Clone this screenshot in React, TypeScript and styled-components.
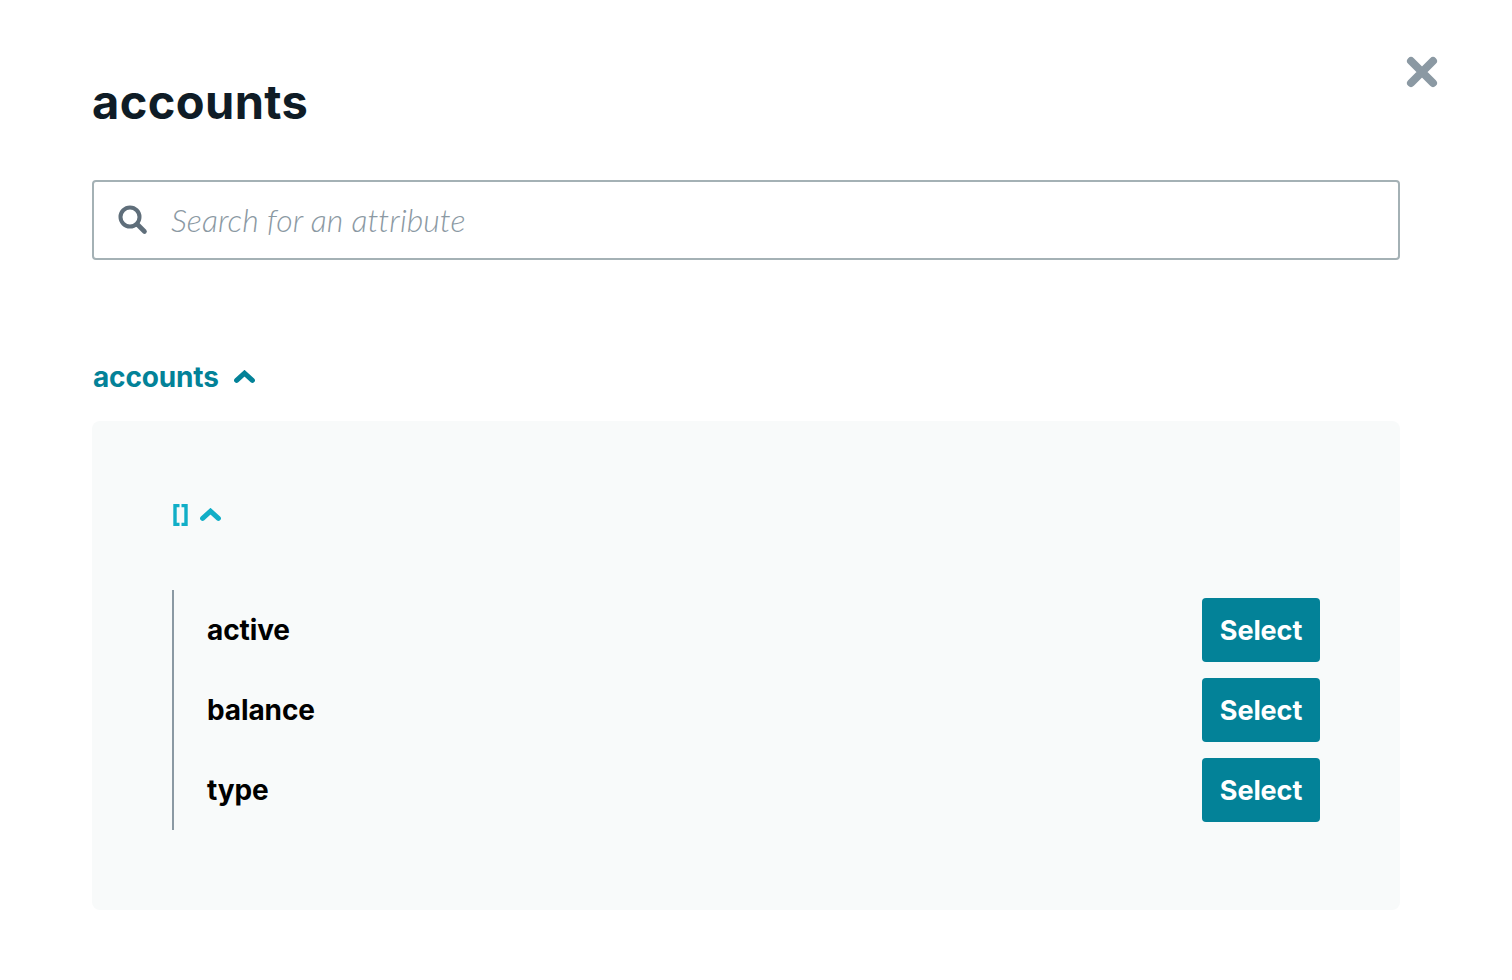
import { createGlobalStyle, styled } from 'styled-components';

const fields = ['active', 'balance', 'type'];

const GlobalStyle = createGlobalStyle`
  html, body {
    margin: 0;
    padding: 0;
    height: 100%;
    background: #ffffff;
    font-family: Inter, "Liberation Sans", sans-serif;
  }
`;

const ChevronUp = ({ size }: { size: number }) => (
  <svg width={size} height={size * 0.62} viewBox="0 0 21 13" fill="none">
    <path d="M2.6 10.4 L10.5 3.2 L18.4 10.4" stroke="currentColor" strokeWidth="5" strokeLinecap="round" strokeLinejoin="miter" />
  </svg>
);

const App = () => {
  return (
    <St.Modal>
      <GlobalStyle />
      <St.Close aria-label="Close">
        <svg width="32" height="32" viewBox="0 0 32 32" fill="none">
          <path d="M5 5 L27 27 M27 5 L5 27" stroke="currentColor" strokeWidth="8" strokeLinecap="round" />
        </svg>
      </St.Close>
      <St.Title>accounts</St.Title>
      <St.Search>
        <svg width="30" height="30" viewBox="0 0 30 30" fill="none">
          <circle cx="12" cy="12" r="9.5" stroke="#5f6e7a" strokeWidth="4" />
          <path d="M19.5 19.5 L26.5 26.5" stroke="#5f6e7a" strokeWidth="4.6" strokeLinecap="round" />
        </svg>
        <St.SearchInput placeholder="Search for an attribute" />
      </St.Search>
      <St.SectionToggle>
        accounts
        <ChevronUp size={21} />
      </St.SectionToggle>
      <St.Panel>
        <St.ArrayToggle>
          <St.Brackets viewBox="0 0 15 22" fill="none">
            <path d="M6.5 1.5 H2 V20.5 H6.5 M8.5 1.5 H13 V20.5 H8.5" stroke="currentColor" strokeWidth="3.4" />
          </St.Brackets>
          <ChevronUp size={21} />
        </St.ArrayToggle>
        <St.List>
          {fields.map((name) => (
            <St.Row key={name}>
              <St.FieldName>{name}</St.FieldName>
              <St.SelectButton>Select</St.SelectButton>
            </St.Row>
          ))}
        </St.List>
      </St.Panel>
    </St.Modal>
  );
};

export default App;

const St = {
  Modal: styled.div`
    position: relative;
    box-sizing: border-box;
    width: 1512px;
    height: 980px;
    padding: 72px 112px 0 92px;
    background: #ffffff;
    overflow: hidden;
  `,
  Close: styled.button`
    position: absolute;
    top: 56px;
    left: 1406px;
    width: 32px;
    height: 32px;
    padding: 0;
    border: 0;
    background: none;
    color: #8b99a3;
  `,
  Title: styled.h1`
    margin: 0;
    height: 60px;
    font-size: 47px;
    line-height: 60px;
    font-weight: 700;
    letter-spacing: 0.4px;
    color: #0f1c26;
  `,
  Search: styled.div`
    box-sizing: border-box;
    display: flex;
    align-items: center;
    gap: 23px;
    height: 80px;
    margin-top: 48px;
    padding: 0 24px;
    border: 2px solid #a4b1b5;
    border-radius: 4px;
  `,
  SearchInput: styled.input`
    flex: 1;
    border: 0;
    outline: 0;
    padding: 0 0 2px;
    background: none;
    font-family: Lato, "Liberation Sans", sans-serif;
    font-size: 32px;
    font-style: italic;
    font-weight: 300;
    letter-spacing: 0.05px;
    color: #8b99a3;

    &::placeholder {
      color: #8b99a3;
      opacity: 1;
    }
  `,
  SectionToggle: styled.div`
    display: flex;
    align-items: center;
    gap: 15px;
    height: 40px;
    margin-top: 97px;
    padding-left: 1px;
    font-size: 28px;
    font-weight: 700;
    letter-spacing: -0.15px;
    color: #038298;
  `,
  Panel: styled.div`
    box-sizing: border-box;
    height: 489px;
    margin-top: 24px;
    padding: 80px;
    background: #f8fafa;
    border-radius: 8px;
  `,
  ArrayToggle: styled.div`
    display: flex;
    align-items: center;
    gap: 12px;
    height: 28px;
    padding-left: 1px;
    color: #11aec7;
  `,
  Brackets: styled.svg`
    width: 15px;
    height: 22px;
  `,
  List: styled.div`
    display: flex;
    flex-direction: column;
    gap: 16px;
    height: 240px;
    box-sizing: border-box;
    margin-top: 61px;
    padding: 8px 0 8px 33px;
    border-left: 2px solid #8b99a3;
  `,
  Row: styled.div`
    display: flex;
    align-items: center;
    justify-content: space-between;
    height: 64px;
  `,
  FieldName: styled.span`
    font-size: 28px;
    font-weight: 700;
    letter-spacing: -0.1px;
    color: #000000;
  `,
  SelectButton: styled.button`
    width: 118px;
    height: 64px;
    padding: 0;
    border: 0;
    border-radius: 4px;
    background: #038298;
    font-family: Inter, "Liberation Sans", sans-serif;
    font-size: 27px;
    font-weight: 700;
    letter-spacing: -0.1px;
    color: #ffffff;
  `,
};
